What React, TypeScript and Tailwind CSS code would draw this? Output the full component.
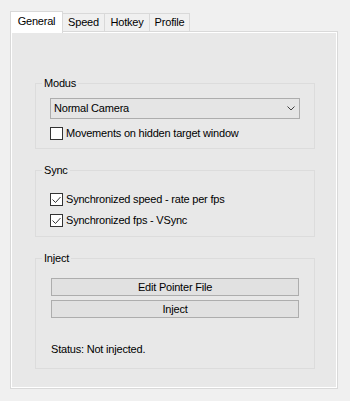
import React from 'react';

const Check = ({ checked, label }: { checked?: boolean; label: string }) => (
  <label className="flex items-center h-[13px]">
    <span className="w-[13px] h-[13px] border border-[#333333] bg-white flex items-center justify-center shrink-0">
      {checked && (
        <svg width="9" height="8" viewBox="0 0 9 8">
          <path d="M0.5 3.5 L3.5 6.5 L8.5 1" fill="none" stroke="#333333" strokeWidth="1" />
        </svg>
      )}
    </span>
    <span className="ml-[3px] whitespace-nowrap">{label}</span>
  </label>
);

const Group = ({ title, className, children }: { title: string; className: string; children: React.ReactNode }) => (
  <div className={`relative w-[280px] border border-[#dcdcdc] px-[14px] ${className}`}>
    <span className="absolute -top-[7px] left-[6px] px-[2px] bg-[#e8e8e8] leading-[13px]">{title}</span>
    {children}
  </div>
);

const Button = ({ label }: { label: string }) => (
  <div className="w-[248px] h-[18px] ml-[1px] border border-[#adadad] bg-[#e1e1e1] flex items-center justify-center">
    {label}
  </div>
);

export default function App() {
  return (
    <div className="w-[350px] h-[401px] bg-[#f0f0f0] pt-[11px] pl-[10px] text-[11px] leading-[13px] text-black tracking-[-0.2px] font-['Liberation_Sans',Arial,sans-serif]">
      <div className="flex items-end h-[20px]">
        <div className="relative z-10 -mb-[2px] h-[22px] w-[53px] bg-white border border-b-0 border-[#d9d9d9] flex justify-center pt-[3px]">
          General
        </div>
        <div className="h-[18px] w-[42px] border-t border-r border-[#d9d9d9] flex justify-center pt-[2px]">Speed</div>
        <div className="h-[18px] w-[45px] border-t border-r border-[#d9d9d9] flex justify-center pt-[2px]">Hotkey</div>
        <div className="h-[18px] w-[40px] border-t border-r border-[#d9d9d9] flex justify-center pt-[2px]">Profile</div>
      </div>

      <div className="w-[328px] h-[358px] border border-[#d9d9d9]">
        <div className="h-full border border-white bg-[#e8e8e8] pt-[50px] pl-[23px]">
          <Group title="Modus" className="pt-[14px] pb-[8px]">
            <div className="h-[21px] border border-[#adadad] bg-[#e5e5e5] flex items-center pl-[3px]">
              <span>Normal Camera</span>
              <svg className="ml-auto mr-[4px]" width="8" height="5" viewBox="0 0 8 5">
                <path d="M0.5 0.5 L4 4 L7.5 0.5" fill="none" stroke="#404040" strokeWidth="1" />
              </svg>
            </div>
            <div className="mt-[8px]">
              <Check label="Movements on hidden target window" />
            </div>
          </Group>

          <Group title="Sync" className="mt-[21px] pt-[22px] pb-[9px]">
            <Check checked label="Synchronized speed - rate per fps" />
            <div className="mt-[8px]">
              <Check checked label="Synchronized fps - VSync" />
            </div>
          </Group>

          <Group title="Inject" className="mt-[21px] pt-[19px] pb-[12px]">
            <Button label="Edit Pointer File" />
            <div className="mt-[4px]">
              <Button label="Inject" />
            </div>
            <div className="mt-[25px] pl-[1px]">Status: Not injected.</div>
          </Group>
        </div>
      </div>
    </div>
  );
}
